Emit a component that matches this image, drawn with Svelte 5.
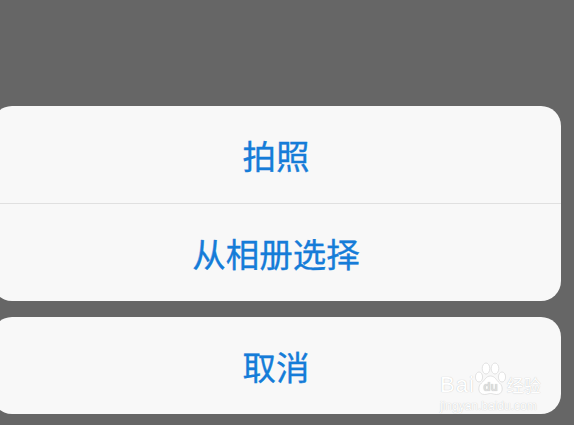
<script lang="ts">
	const actions = ['拍照', '从相册选择'];
</script>

<div class="sheet">
	<div class="group">
		{#each actions as label}
			<button class="action">{label}</button>
		{/each}
	</div>
	<div class="group">
		<button class="action">取消</button>
	</div>

	<div class="mark" aria-hidden="true">
		<div class="mark-top">
			<span class="bai">Bai</span>
			<svg class="paw" viewBox="0 0 32 34" width="32" height="34">
				<ellipse cx="5" cy="15" rx="3.6" ry="5" />
				<ellipse cx="12" cy="6.5" rx="3.8" ry="5.5" />
				<ellipse cx="21" cy="6.5" rx="3.8" ry="5.5" />
				<ellipse cx="28" cy="15" rx="3.6" ry="5" />
				<path d="M16.5 14c-4.500 0-5.500 4-9 7-4 3-4 11.500 3 11.500 2.500 0 4-1 6-1s3.500 1 6 1c7 0 7-8.500 3-11.500-3.500-3-4.500-7-9-7z" />
				<text x="16.5" y="29">du</text>
			</svg>
			<span class="jy">经验</span>
		</div>
		<div class="url">jingyan.baidu.com</div>
	</div>
</div>

<style>
	:global(body) {
		margin: 0;
		background: #666666;
	}

	.sheet {
		position: relative;
		box-sizing: border-box;
		width: 574px;
		height: 425px;
		overflow: hidden;
		padding: 106px 13px 0 0;
		display: flex;
		flex-direction: column;
		align-items: flex-end;
		gap: 16px;
		background: #666666;
		font-family: 'Noto Sans CJK SC', 'Liberation Sans', sans-serif;
	}

	.group {
		flex: none;
		width: 569px;
		background: #f8f8f8;
		border-radius: 20px;
		display: flex;
		flex-direction: column;
	}

	.action {
		box-sizing: border-box;
		height: 97px;
		padding: 0 1px 1px 0;
		border: 0;
		background: none;
		color: #157cd8;
		font: inherit;
		font-size: 33.5px;
		-webkit-text-stroke: 0.35px #157cd8;
		text-align: center;
	}

	.action + .action {
		height: 98px;
		border-top: 1px solid #e0e0e0;
	}

	.mark {
		position: absolute;
		left: 440px;
		top: 362px;
		width: 104px;
		color: #ffffff;
		text-shadow: 0 0 1px #b8b8b8;
	}

	.mark-top {
		display: flex;
		align-items: flex-end;
		height: 34px;
	}

	.bai {
		font-family: 'Liberation Sans', sans-serif;
		font-size: 22px;
		line-height: 22px;
		letter-spacing: 1px;
	}

	.paw {
		flex: none;
		margin: 0 1px 0 -1px;
		fill: #ffffff;
		stroke: #d0d0d0;
		stroke-width: 0.6;
	}

	.paw text {
		font-family: 'Liberation Sans', sans-serif;
		font-size: 12px;
		font-weight: 700;
		text-anchor: middle;
		fill: #dedede;
		stroke: none;
	}

	.jy {
		font-size: 17px;
		line-height: 22px;
		white-space: nowrap;
	}

	.url {
		font-family: 'Liberation Sans', sans-serif;
		font-size: 12px;
		line-height: 14px;
		margin-top: 3px;
		white-space: nowrap;
	}
</style>
